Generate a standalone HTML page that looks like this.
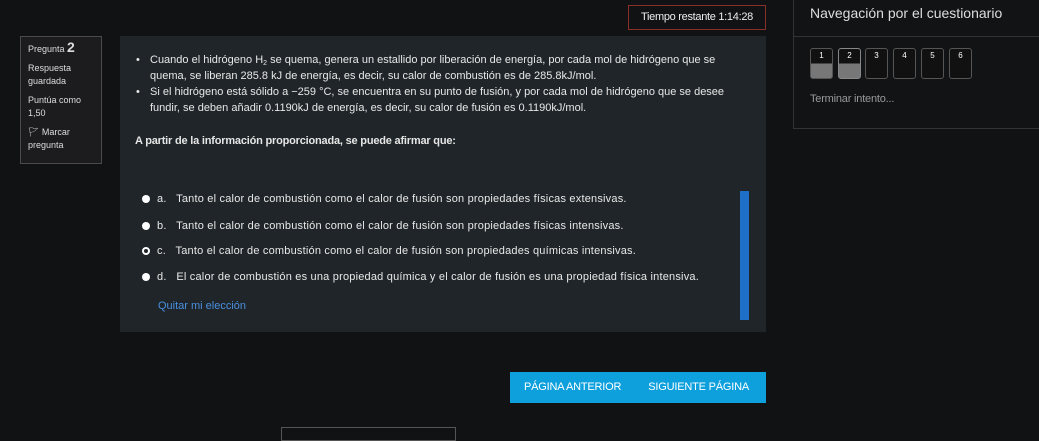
<!DOCTYPE html>
<html><head><meta charset="utf-8"><style>
body{margin:0;width:1039px;height:436px;background:#111213;font-family:"Liberation Sans",sans-serif;color:#e6e6e6;position:relative;overflow:hidden}
.a{position:absolute}
.info{left:20px;top:36px;width:82px;height:128px;border:1px solid #4a4a4a;background:#1c1c1e;font-size:9px;line-height:13px;color:#ddd;box-sizing:border-box;padding:4px 7px}
.info p{margin:0 0 6px}
.q{left:120px;top:36px;width:646px;height:296px;background:#1f2528}
.t{font-size:11px;letter-spacing:0;line-height:16px;color:#e8e8e8}
.opt{position:absolute;left:22px;font-size:11px;letter-spacing:0.2px;color:#e8e8e8}
.dot{display:inline-block;width:8px;height:8px;border-radius:50%;background:#fff;vertical-align:-1px;margin-right:7px}
.btn{top:372px;height:31px;background:#0ea0dd;color:#fff;font-size:11px;letter-spacing:-0.2px;line-height:31px}
.nb{width:23px;height:31px;border:1px solid #555;border-radius:3px;box-sizing:border-box;font-size:8px;color:#fff;text-align:center;line-height:14px;top:48px;background:#111}
</style></head><body>
<div class="a" style="left:628px;top:5px;width:138px;height:25px;border:1px solid #8a3028;box-sizing:border-box;font-size:11px;letter-spacing:-0.3px;line-height:23px;text-align:center;color:#eee">Tiempo restante 1:14:28</div>
<div class="a info"><p>Pregunta <b style="font-size:14px">2</b></p><p>Respuesta guardada</p><p>Puntúa como 1,50</p><p>&#x1F6A9;&#xFE0E; Marcar pregunta</p></div>
<div class="a q">
 <div class="a t" style="left:16px;top:16px;width:618px">
  <div style="padding-left:14px;position:relative"><span class="a" style="left:0">•</span>Cuando el hidrógeno H<span style="font-size:7px;line-height:0;vertical-align:-2px">2</span> se quema, genera un estallido por liberación de energía, por cada mol de hidrógeno que se quema, se liberan 285.8 kJ de energía, es decir, su calor de combustión es de 285.8kJ/mol.</div>
  <div style="padding-left:14px;position:relative"><span class="a" style="left:0">•</span>Si el hidrógeno está sólido a −259 °C, se encuentra en su punto de fusión, y por cada mol de hidrógeno que se desee fundir, se deben añadir 0.1190kJ de energía, es decir, su calor de fusión es 0.1190kJ/mol.</div>
 </div>
 <div class="a" style="left:15px;top:99px;font-size:11px;font-weight:bold;letter-spacing:-0.2px">A partir de la información proporcionada, se puede afirmar que:</div>
 <div class="opt" style="top:157px"><span class="dot"></span>a.&nbsp;&nbsp; Tanto el calor de combustión como el calor de fusión son propiedades físicas extensivas.</div>
 <div class="opt" style="top:184px"><span class="dot"></span>b.&nbsp;&nbsp; Tanto el calor de combustión como el calor de fusión son propiedades físicas intensivas.</div>
 <div class="opt" style="top:209px"><span class="dot" style="background:#1f2528;border:2px solid #fff;width:4px;height:4px"></span>c.&nbsp;&nbsp; Tanto el calor de combustión como el calor de fusión son propiedades químicas intensivas.</div>
 <div class="opt" style="top:235px"><span class="dot"></span>d.&nbsp;&nbsp; El calor de combustión es una propiedad química y el calor de fusión es una propiedad física intensiva.</div>
 <div class="a" style="left:38px;top:264px;font-size:11px;color:#4a8fe0">Quitar mi elección</div>
 <div class="a" style="left:620px;top:155px;width:9px;height:129px;background:#1e6fc8"></div>
</div>
<div class="a btn" style="left:510px;width:256px"><span style="margin-left:14px">PÁGINA ANTERIOR</span><span style="margin-left:27px">SIGUIENTE PÁGINA</span></div>
<div class="a" style="left:281px;top:427px;width:173px;height:12px;border:1px solid #555"></div>
<div class="a" style="left:793px;top:-1px;width:250px;height:130px;border:1px solid #333;box-sizing:border-box;background:#121314">
 <div class="a" style="left:16px;top:5px;font-size:14px;color:#ddd">Navegación por el cuestionario</div>
 <div class="a" style="left:0;top:36px;width:250px;height:1px;background:#333"></div>
 <div class="a" style="left:16px;top:93px;font-size:11px;color:#999;letter-spacing:-0.2px">Terminar intento...</div>
</div>
<div class="a nb" style="left:810px;background:linear-gradient(#111 0 50%,#777 50%)">1</div>
<div class="a nb" style="left:838px;background:linear-gradient(#111 0 50%,#777 50%);border-color:#888">2</div>
<div class="a nb" style="left:865px">3</div>
<div class="a nb" style="left:893px">4</div>
<div class="a nb" style="left:921px">5</div>
<div class="a nb" style="left:949px">6</div>
</body></html>
